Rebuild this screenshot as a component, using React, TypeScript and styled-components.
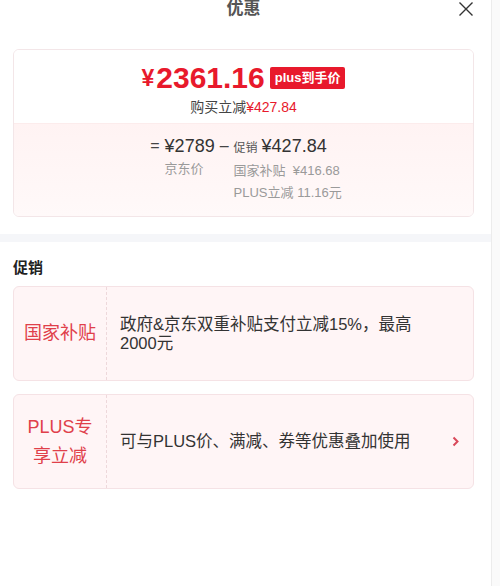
import styled, { createGlobalStyle } from "styled-components";

const GlobalStyle = createGlobalStyle`
  html, body {
    margin: 0;
    padding: 0;
    background: #ffffff;
  }
  body {
    font-family: "Liberation Sans", "Noto Sans CJK SC", sans-serif;
    color: #333333;
  }
  * {
    box-sizing: border-box;
  }
`;

const Page = styled.div`
  display: flex;
  width: 500px;
  height: 586px;
  overflow: hidden;
`;

const Sheet = styled.div`
  flex: 1;
  display: flex;
  flex-direction: column;
  background: #ffffff;
`;

const ScrollTrack = styled.div`
  width: 9px;
  background: #fafafa;
  border-left: 1px solid #ececec;
`;

const Header = styled.div`
  display: grid;
  grid-template-columns: 1fr auto 1fr;
  align-items: center;
  height: 16px;
  padding: 0 17px 0 13px;
`;

const Title = styled.div`
  grid-column: 2;
  font-size: 17px;
  font-weight: 700;
  line-height: 18px;
  color: #555555;
`;

const CloseButton = styled.button`
  justify-self: end;
  display: flex;
  padding: 0;
  border: none;
  background: none;
  cursor: pointer;
`;

const Section = styled.div`
  padding: 0 17px 0 13px;
`;

const PriceCard = styled.div`
  margin-top: 33px;
  border: 1px solid #f3e6e8;
  border-radius: 6px;
  overflow: hidden;
`;

const PriceTop = styled.div`
  height: 73px;
  display: flex;
  flex-direction: column;
  align-items: center;
  padding-top: 11px;
  background: #ffffff;
`;

const PriceLine = styled.div`
  display: flex;
  align-items: center;
  color: #e8192c;
  height: 34px;
`;

const Yen = styled.span`
  font-size: 23px;
  font-weight: 700;
  margin-right: 2px;
`;

const Amount = styled.span`
  font-size: 30px;
  font-weight: 700;
  margin-right: 5px;
`;

const Badge = styled.span`
  background: #e8192c;
  color: #ffffff;
  font-size: 13px;
  font-weight: 700;
  line-height: 22px;
  padding: 0 5px;
  border-radius: 2px;
`;

const SaveLine = styled.div`
  margin-top: 3px;
  font-size: 14px;
  line-height: 18px;
  color: #444444;

  em {
    font-style: normal;
    color: #e8192c;
  }
`;

const PriceBottom = styled.div`
  border-top: 1px solid #fcecec;
  background: linear-gradient(180deg, #fff3f3 0%, #fff9f9 100%);
  padding: 10px 0 12px;
  display: flex;
  justify-content: center;
  align-items: flex-start;
`;

const Op = styled.span`
  font-size: 16px;
  line-height: 24px;
  color: #444444;
  padding: 0 5px;
`;

const Col = styled.div`
  display: flex;
  flex-direction: column;
  align-items: flex-start;
`;

const MainValue = styled.div`
  font-size: 18px;
  line-height: 24px;
  color: #333333;

  small {
    font-size: 12px;
    color: #555555;
    margin-right: 4px;
  }
`;

const SubValue = styled.div`
  font-size: 13px;
  line-height: 22px;
  color: #9a9a9a;
  white-space: pre;
`;

const Band = styled.div`
  height: 8px;
  margin-top: 17px;
  background: #f5f6f9;
`;

const SectionTitle = styled.div`
  margin-top: 16px;
  font-size: 15px;
  font-weight: 700;
  line-height: 20px;
  color: #222222;
`;

const PromoList = styled.div`
  display: flex;
  flex-direction: column;
  gap: 13px;
  margin-top: 8px;
`;

const PromoCard = styled.div`
  display: flex;
  height: 95px;
  background: #fff5f6;
  border: 1px solid #f5e2e5;
  border-radius: 6px;
`;

const PromoLabel = styled.div`
  width: 93px;
  flex-shrink: 0;
  display: flex;
  flex-direction: column;
  align-items: center;
  justify-content: center;
  border-right: 1px dashed #eed8db;
  color: #e0404a;
  font-size: 18px;
  line-height: 29px;
`;

const PromoBody = styled.div`
  flex: 1;
  display: flex;
  align-items: center;
  padding: 0 14px 0 13px;
  gap: 16px;
`;

const PromoText = styled.div`
  flex: 1;
  font-size: 16.5px;
  line-height: 19px;
  color: #333333;
`;

const Chevron = styled.span<{ $hidden: boolean }>`
  display: flex;
  width: 7px;
  color: #d9485a;
  visibility: ${(p) => (p.$hidden ? "hidden" : "visible")};
`;

const promos = [
  {
    label: ["国家补贴"],
    text: "政府&京东双重补贴支付立减15%，最高2000元",
    arrow: false,
  },
  {
    label: ["PLUS专", "享立减"],
    text: "可与PLUS价、满减、券等优惠叠加使用",
    arrow: true,
  },
];

export default function App() {
  return (
    <Page>
      <GlobalStyle />
      <Sheet>
        <Header>
          <Title>优惠</Title>
          <CloseButton aria-label="关闭">
            <svg width="16" height="14" viewBox="0 0 16 14">
              <path
                d="M1.5 0.5 L14.5 13.5 M14.5 0.5 L1.5 13.5"
                stroke="#333"
                strokeWidth="1.4"
                fill="none"
              />
            </svg>
          </CloseButton>
        </Header>

        <Section>
          <PriceCard>
            <PriceTop>
              <PriceLine>
                <Yen>¥</Yen>
                <Amount>2361.16</Amount>
                <Badge>plus到手价</Badge>
              </PriceLine>
              <SaveLine>
                购买立减<em>¥427.84</em>
              </SaveLine>
            </PriceTop>
            <PriceBottom>
              <Op>=</Op>
              <Col>
                <MainValue>¥2789</MainValue>
                <SubValue>京东价</SubValue>
              </Col>
              <Op>–</Op>
              <Col>
                <MainValue>
                  <small>促销</small>¥427.84
                </MainValue>
                <SubValue>国家补贴  ¥416.68</SubValue>
                <SubValue>PLUS立减 11.16元</SubValue>
              </Col>
            </PriceBottom>
          </PriceCard>
        </Section>

        <Band />

        <Section>
          <SectionTitle>促销</SectionTitle>
          <PromoList>
            {promos.map((promo) => (
              <PromoCard key={promo.text}>
                <PromoLabel>
                  {promo.label.map((line) => (
                    <span key={line}>{line}</span>
                  ))}
                </PromoLabel>
                <PromoBody>
                  <PromoText>{promo.text}</PromoText>
                  <Chevron $hidden={!promo.arrow}>
                    <svg width="7" height="11" viewBox="0 0 7 11">
                      <path
                        d="M1.5 1.5 L5.5 5.5 L1.5 9.5"
                        stroke="currentColor"
                        strokeWidth="2"
                        fill="none"
                      />
                    </svg>
                  </Chevron>
                </PromoBody>
              </PromoCard>
            ))}
          </PromoList>
        </Section>
      </Sheet>
      <ScrollTrack />
    </Page>
  );
}
